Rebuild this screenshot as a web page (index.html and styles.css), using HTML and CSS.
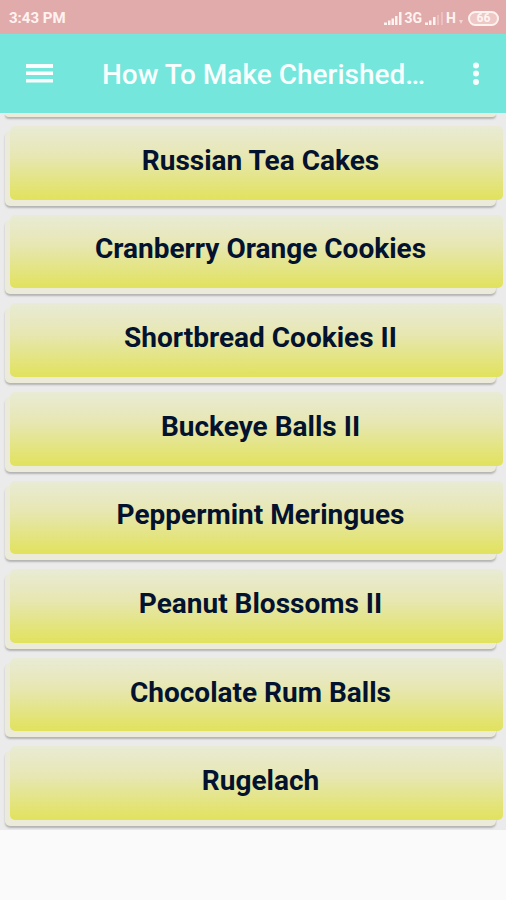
FILE: index.html
```html
<!DOCTYPE html>
<html lang="en">
<head>
    <meta charset="UTF-8">
    <meta name="viewport" content="width=device-width, initial-scale=1.0">
    <title>How To Make Cherished…</title>
    <link rel="stylesheet" href="styles.css">
</head>
<body>
    <div class="status-bar">
        <span class="status-time">3:43 PM</span>
        <div class="status-icons">
            <svg class="signal" width="18" height="13" viewBox="0 0 18 13" fill="currentColor">
                <path d="M0 10.500h3V13H0zM4 8.500h2.500V13H4zM7.500 6.500H10V13H7.500zM11 4h2.500v9H11zM15 0h2.500v13H15z"/>
            </svg>
            <span>3G</span>
            <svg class="signal" width="18" height="13" viewBox="0 0 18 13" fill="currentColor">
                <path d="M0 10.500h3V13H0zM4 8.500h2.500V13H4zM8 5h2.500v8H8z"/>
                <path opacity=".3" d="M12 3h2v10h-2zM16 0h2v13h-2z"/>
            </svg>
            <span>H</span>
            <svg class="data" width="5" height="13" viewBox="0 0 5 13" fill="currentColor">
                <path opacity=".6" d="M0 8h4l-2 4z"/>
            </svg>
            <span class="battery">66</span>
        </div>
    </div>

    <header class="toolbar">
        <button class="icon-button" aria-label="Menu">
            <svg width="28" height="20" viewBox="0 0 28 20" fill="currentColor">
                <path d="M0 0h27v4H0zM0 7.500h27v3.500H0zM0 15h27v3.500H0z"/>
            </svg>
        </button>
        <h1>How To Make Cherished…</h1>
        <button class="icon-button more" aria-label="More options">
            <svg width="8" height="24" viewBox="0 0 8 24" fill="currentColor">
                <circle cx="4" cy="3.500" r="3"/>
                <circle cx="4" cy="11.500" r="3"/>
                <circle cx="4" cy="20" r="3"/>
            </svg>
        </button>
    </header>

    <main class="recipes">
        <div class="recipe-row scrolled"><div class="recipe"></div></div>
        <div class="recipe-row"><button class="recipe"><span>Russian Tea Cakes</span></button></div>
        <div class="recipe-row"><button class="recipe"><span>Cranberry Orange Cookies</span></button></div>
        <div class="recipe-row"><button class="recipe"><span>Shortbread Cookies II</span></button></div>
        <div class="recipe-row"><button class="recipe"><span>Buckeye Balls II</span></button></div>
        <div class="recipe-row"><button class="recipe"><span>Peppermint Meringues</span></button></div>
        <div class="recipe-row"><button class="recipe"><span>Peanut Blossoms II</span></button></div>
        <div class="recipe-row"><button class="recipe"><span>Chocolate Rum Balls</span></button></div>
        <div class="recipe-row"><button class="recipe"><span>Rugelach</span></button></div>
    </main>

    <footer class="banner"></footer>
</body>
</html>
```
FILE: styles.css
```css
* {
    margin: 0;
    padding: 0;
    box-sizing: border-box;
}

body {
    font-family: Roboto, sans-serif;
    background: #fafafa;
    min-height: 100vh;
    display: flex;
    flex-direction: column;
}

button {
    border: none;
    background: none;
    color: inherit;
    font: inherit;
    cursor: pointer;
}

svg {
    display: block;
}

.status-bar {
    height: 34px;
    padding: 2px 7px 0 9px;
    background: #e2abab;
    color: #fff3f0;
    display: flex;
    justify-content: space-between;
    align-items: center;
    font-size: 15px;
    font-weight: 700;
}

.status-icons {
    display: flex;
    align-items: center;
    gap: 3px;
    font-size: 14px;
}

.battery {
    width: 31px;
    height: 15px;
    margin-left: 1px;
    border: 2px solid currentColor;
    border-radius: 8px;
    background: #edc8c6;
    font-size: 12px;
    line-height: 11px;
    text-align: center;
}

.toolbar {
    height: 79px;
    padding: 0 6px 0 16px;
    background: #74e6dc;
    color: #f8fffe;
    display: flex;
    align-items: center;
}

.toolbar h1 {
    flex: 1;
    padding: 2px 0 0 38px;
    font-size: 28px;
    font-weight: 500;
    line-height: 32px;
    white-space: nowrap;
}

.icon-button {
    width: 48px;
    height: 48px;
    display: flex;
    align-items: center;
    justify-content: center;
}

.recipes {
    flex: 1;
    background: #ebebeb;
    display: flex;
    flex-direction: column;
}

.recipe-row {
    flex: 1;
    padding: 10px 10px 4px 5px;
    display: flex;
}

/* the last strip of the card that is scrolled under the toolbar */
.scrolled {
    flex: none;
    height: 8px;
    padding-top: 0;
}

.recipe {
    flex: 1;
    display: flex;
    background: #ecebd9;
    border-radius: 5px;
    box-shadow: 0 2px 2px #b4b4b4;
}

.scrolled .recipe {
    border-radius: 0 0 5px 5px;
}

.recipe span {
    flex: 1;
    align-self: stretch;
    display: flex;
    align-items: center;
    justify-content: center;
    margin: -5px -7px 6px 5px;
    padding: 0 0 4px 8px;
    border-radius: 5px;
    background: linear-gradient(#e9ebd5, #e7e7b4 40%, #e1e25c);
    color: #03122e;
    font-size: 28px;
    font-weight: 700;
    line-height: 32px;
}

.banner {
    height: 70px;
    background: #fafafa;
}
```
